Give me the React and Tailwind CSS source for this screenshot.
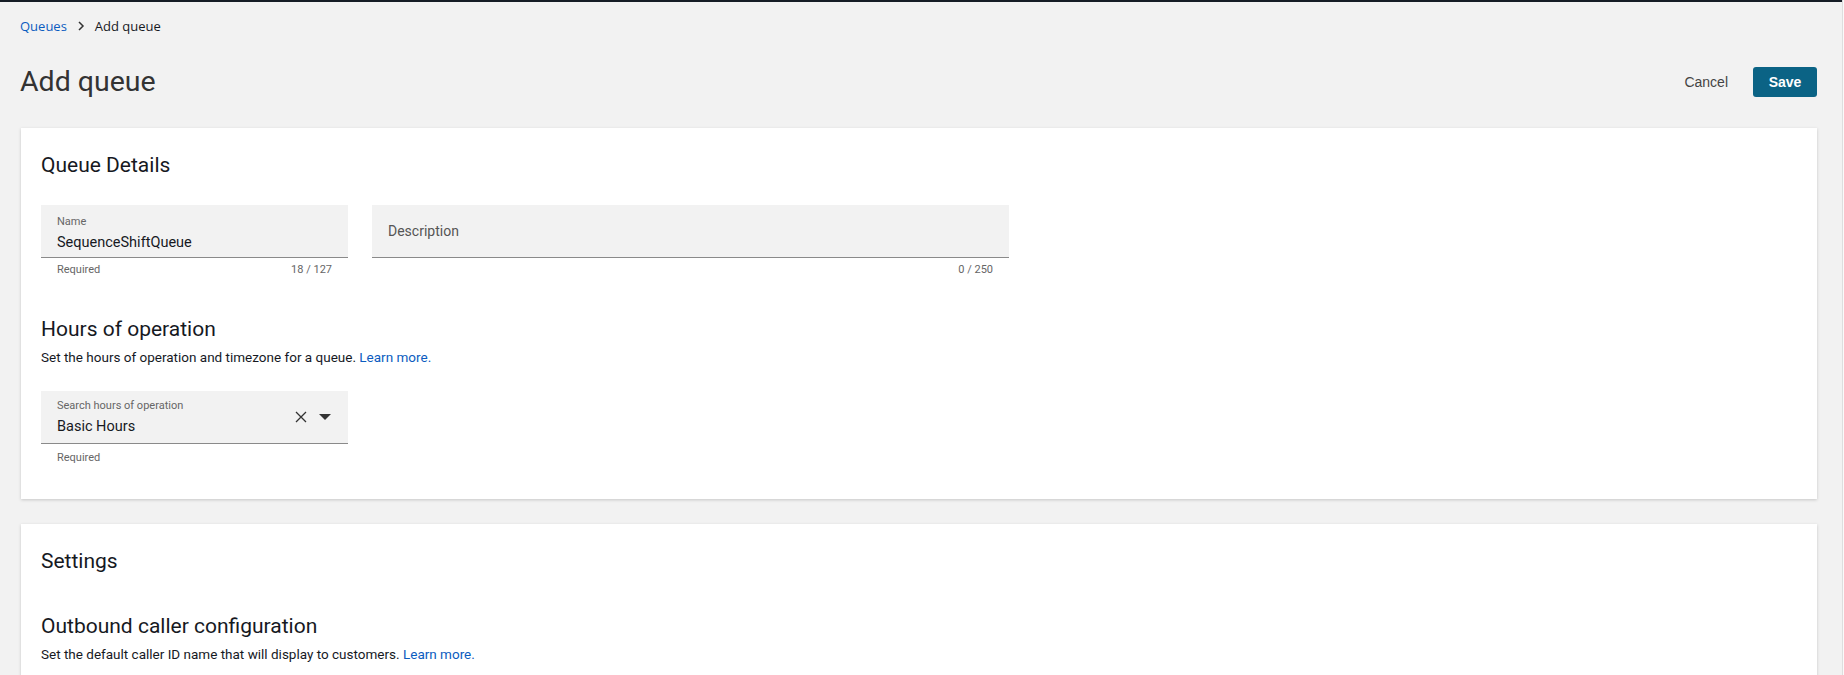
import React from "react";

const ember = { fontFamily: "Roboto, 'Open Sans', sans-serif" };
const open = { fontFamily: "'Open Sans', 'Noto Sans', sans-serif" };
const roboto = { fontFamily: "Roboto, 'Liberation Sans', sans-serif" };
const helv = { fontFamily: "'Liberation Sans', Arial, sans-serif" };

const TextField = ({ width, label, value, helper, count }) => (
  <div className={width}>
    {value ? (
      <div className="h-[53px] border-b border-[#8a8a8a] bg-[#f2f2f2] px-4 pt-[9px]">
        <p className="text-[11px] leading-[16px] text-[#666]" style={roboto}>
          {label}
        </p>
        <p className="mt-[3px] text-[14.5px] leading-[20px] text-[#16191f]" style={ember}>
          {value}
        </p>
      </div>
    ) : (
      <div className="flex h-[53px] items-center border-b border-[#8a8a8a] bg-[#f2f2f2] px-4">
        <p className="text-[14px] text-[#555]" style={roboto}>
          {label}
        </p>
      </div>
    )}
    <div
      className="mt-[5px] flex justify-between px-4 text-[11px] leading-[14px] text-[#666]"
      style={roboto}
    >
      <span>{helper}</span>
      <span>{count}</span>
    </div>
  </div>
);

const SectionText = ({ children }) => (
  <p className="mt-[5px] text-[13.5px] leading-[18px] text-[#16191f]" style={ember}>
    {children}{" "}
    <a href="#" className="text-[#0b5cc0]">
      Learn more.
    </a>
  </p>
);

export default function App() {
  return (
    <div className="flex min-h-screen bg-[#f2f2f2]">
      <div className="flex-1">
        <div className="h-[2px] bg-[#161d26]" />
        <div className="pl-[20px] pr-[25px]">
          <nav className="mt-[15px] flex items-center gap-[10px] text-[13px] leading-[18px]" style={open}>
            <a href="#" className="text-[#0b5cc0]">
              Queues
            </a>
            <svg width="8" height="10" viewBox="0 0 8 10" fill="none">
              <path d="M2 1l4 4-4 4" stroke="#333" strokeWidth="1.5" />
            </svg>
            <span className="text-[#16191f]">Add queue</span>
          </nav>

          <div className="mt-[31px] flex items-center justify-between">
            <h1 className="text-[28.5px] leading-[32px] text-[#333]" style={ember}>
              Add queue
            </h1>
            <div className="flex items-center gap-[25px]" style={helv}>
              <button className="text-[14px] text-[#444]">Cancel</button>
              <button className="h-[30px] w-[64px] rounded-[3px] bg-[#0b6385] text-[14px] font-bold text-white">
                Save
              </button>
            </div>
          </div>

          <section className="mt-[30px] ml-px bg-white px-5 pt-[23px] pb-[34px] shadow-[0_1px_3px_rgba(0,0,0,0.18)]">
            <h2 className="text-[21px] leading-[28px] text-[#16191f]" style={ember}>
              Queue Details
            </h2>
            <div className="mt-[26px] flex gap-[24px]">
              <TextField
                width="w-[307px]"
                label="Name"
                value="SequenceShiftQueue"
                helper="Required"
                count="18 / 127"
              />
              <TextField width="w-[637px]" label="Description" helper="" count="0 / 250" />
            </div>

            <h2 className="mt-[38px] text-[21px] leading-[28px] text-[#16191f]" style={ember}>
              Hours of operation
            </h2>
            <SectionText>Set the hours of operation and timezone for a queue.</SectionText>

            <div className="mt-[25px] w-[307px]">
              <div className="flex h-[53px] items-center border-b border-[#8a8a8a] bg-[#f2f2f2] pl-4 pr-[17px]">
                <div className="flex-1 pt-px">
                  <p className="text-[11px] leading-[16px] text-[#666]" style={roboto}>
                    Search hours of operation
                  </p>
                  <p className="mt-[3px] text-[14.5px] leading-[20px] text-[#16191f]" style={ember}>
                    Basic Hours
                  </p>
                </div>
                <svg width="12" height="12" viewBox="0 0 12 12" fill="none">
                  <path d="M1 1l10 10M11 1L1 11" stroke="#333" strokeWidth="1.3" />
                </svg>
                <svg className="ml-[12px]" width="12" height="6" viewBox="0 0 12 6">
                  <path d="M0 0h12L6 6z" fill="#333" />
                </svg>
              </div>
              <p className="mt-[7px] px-4 text-[11px] leading-[14px] text-[#666]" style={roboto}>
                Required
              </p>
            </div>
          </section>

          <section className="mt-[25px] ml-px bg-white px-5 pt-[23px] pb-10 shadow-[0_1px_3px_rgba(0,0,0,0.18)]">
            <h2 className="text-[21px] leading-[28px] text-[#16191f]" style={ember}>
              Settings
            </h2>
            <h2 className="mt-[37px] text-[21px] leading-[28px] text-[#16191f]" style={ember}>
              Outbound caller configuration
            </h2>
            <SectionText>Set the default caller ID name that will display to customers.</SectionText>
          </section>
        </div>
      </div>
      <div className="w-[2px] border-l border-[#dedede] bg-[#fafafa]" />
    </div>
  );
}
